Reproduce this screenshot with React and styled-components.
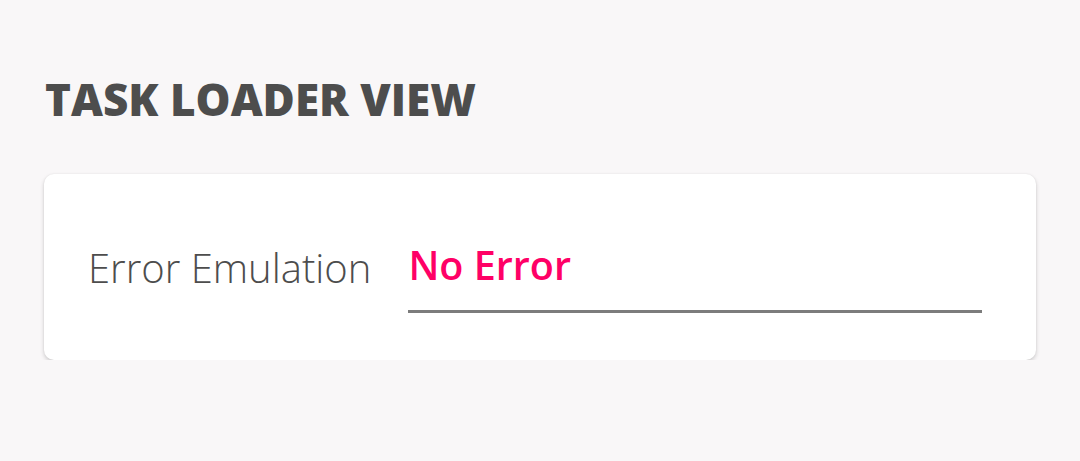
import React from 'react';
import styled, { createGlobalStyle } from 'styled-components';

const GlobalStyle = createGlobalStyle`
  html, body {
    margin: 0;
    padding: 0;
    background: #f9f7f8;
    font-family: "Open Sans", "Liberation Sans", sans-serif;
  }
`

const Page = styled.div`
  padding: 71px 44px 0 44px;
`

const Title = styled.h1`
  margin: 0 0 0 1px;
  font-size: 44px;
  font-weight: 800;
  line-height: 56px;
  color: #4d4d4d;
`

const Card = styled.div`
  margin-top: 47px;
  height: 186px;
  box-sizing: border-box;
  background: #fff;
  border-radius: 10px;
  box-shadow: 0 2px 4px rgba(0, 0, 0, 0.18), 0 0 2px rgba(0, 0, 0, 0.06);
  display: flex;
  align-items: center;
  padding: 0 54px 0 44px;
`

const Label = styled.span`
  font-size: 40px;
  font-weight: 300;
  color: #4d4d4d;
  margin-right: 37px;
  white-space: nowrap;
`

const Select = styled.div`
  flex: 1;
  border-bottom: 3px solid #7c7c7c;
  padding: 0 0 18px 0;
  margin-top: 16px;
  font-size: 39.5px;
  font-weight: 600;
  color: #ff0066;
`

export default function App() {
  return (
    <>
      <GlobalStyle />
      <Page>
        <Title>TASK LOADER VIEW</Title>
        <Card>
          <Label>Error Emulation</Label>
          <Select>No Error</Select>
        </Card>
      </Page>
    </>
  )
}
